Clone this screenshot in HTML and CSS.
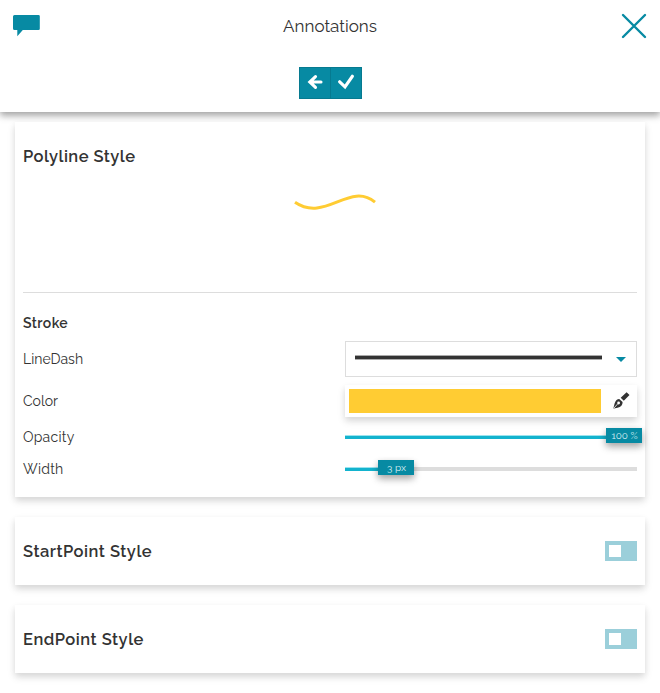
FILE: index.html
```html
<!DOCTYPE html>
<html lang="en">
<head>
<meta charset="utf-8">
<title>Annotations</title>
<link rel="stylesheet" href="styles.css">
</head>
<body>
<header class="header">
  <div class="title-row">
    <svg class="comment" width="28" height="23" viewBox="0 0 28 23"><path fill="#078aa3" d="M1.500 0H25.500a1.300 1.300 0 0 1 1.300 1.300v12.400a1.300 1.300 0 0 1-1.300 1.300H9.800L4.300 21.300V15H1.500A1.500 1.500 0 0 1 0 13.500V1.500A1.500 1.500 0 0 1 1.500 0z"/></svg>
    <h1 class="title">Annotations</h1>
    <svg class="close" width="26" height="26" viewBox="0 0 26 26"><path d="M2 2 24 24M24 2 2 24" stroke="#078aa3" stroke-width="2.400" stroke-linecap="round"/></svg>
  </div>
  <div class="toolbar">
    <button class="tool" aria-label="Back"><svg width="16" height="16" viewBox="0 0 16 16"><path d="M14 8H4M8.500 2.600 2.800 8l5.700 5.400" fill="none" stroke="#fff" stroke-width="3.100" stroke-linecap="round"/></svg></button>
    <button class="tool" aria-label="Save"><svg width="16" height="16" viewBox="0 0 16 16"><path d="M1.700 7.800 7 12.800 14.300 2.300" fill="none" stroke="#fff" stroke-width="3.200" stroke-linecap="round"/></svg></button>
  </div>
</header>
<main class="content">
  <section class="card main-card">
    <h2 class="heading">Polyline Style</h2>
    <div class="preview"><svg width="100" height="40" viewBox="0 0 100 40"><path d="M15 21.200C45 42 70 0 95 21.200" fill="none" stroke="#ffcc33" stroke-width="3"/></svg></div>
    <h3 class="subheading">Stroke</h3>
    <div class="row row-dash">
      <span class="label">LineDash</span>
      <div class="field select"><span class="dash"></span><svg width="10" height="5" viewBox="0 0 10 5"><path d="M0 0h10L5 5z" fill="#078aa3"/></svg></div>
    </div>
    <div class="row row-color">
      <span class="label">Color</span>
      <div class="field color"><span class="swatch"></span><svg width="17" height="17" viewBox="0 0 17 17"><path d="M13.600.3 16.500 3 10.800 8.700 7.700 5.800zM6.200 6.900 9.600 10C9.700 13 8 15.200 4.500 15.800L.8 16.600.400 16.200 1.600 11.500C2.600 8.300 4.300 6.900 6.200 6.900z" fill="#333"/><path d="M1 16 5 11.500" stroke="#fff" stroke-width=".8"/><circle cx="5.600" cy="11" r="1.400" fill="#fff"/></svg></div>
    </div>
    <div class="row">
      <span class="label label-wide">Opacity</span>
      <div class="field slider"><span class="fill" style="width:100%"></span><span class="handle" style="left:261px">100 %</span></div>
    </div>
    <div class="row">
      <span class="label label-wide">Width</span>
      <div class="field slider"><span class="fill" style="width:51px"></span><span class="handle" style="left:33px">3 px</span></div>
    </div>
  </section>
  <section class="card switch-card">
    <h2 class="heading">StartPoint Style</h2>
    <span class="switch"></span>
  </section>
  <section class="card switch-card">
    <h2 class="heading">EndPoint Style</h2>
    <span class="switch"></span>
  </section>
</main>
</body>
</html>
```
FILE: styles.css
```css
* { box-sizing: border-box; }
html { overflow: hidden; }
body {
  margin: 0;
  height: 693px;
  overflow: hidden;
  background: #fff;
  color: #333;
  font: 14px/20px Raleway, Lato, sans-serif;
}
h1, h2, h3 { margin: 0; }
.header {
  height: 112px;
  box-shadow: 0 3px 6px rgba(0,0,0,.2), 0 4px 8px rgba(0,0,0,.2);
}
.title-row {
  height: 52px;
  display: grid;
  grid-template-columns: 52px 1fr 52px;
  align-items: center;
}
.comment { margin: 1px 0 0 13px; }
.title { font-size: 17px; font-weight: 400; text-align: center; }
.close { justify-self: center; }
.toolbar { display: flex; justify-content: center; padding: 15px 0 0 1px; }
.tool {
  width: 32px;
  height: 32px;
  padding: 0 0 3px;
  border: 1px solid #067a90;
  background: #078aa3;
  display: flex;
  align-items: center;
  justify-content: center;
}
.tool + .tool { margin-left: -1px; }
.content {
  padding: 10px 15px 20px;
  display: flex;
  flex-direction: column;
  gap: 20px;
}
.card {
  position: relative;
  padding: 0 8px;
  background: #fff;
  box-shadow: 0 3px 6px rgba(0,0,0,.06), 0 4px 8px rgba(0,0,0,.12);
}
.main-card { height: 375px; }
.heading { font-size: 16.500px; line-height: 20px; font-weight: 600; letter-spacing: .5px; }
.main-card .heading { padding-top: 24px; letter-spacing: .45px; }
.preview {
  height: 127px;
  border-bottom: 1px solid #ddd;
  text-align: center;
  padding: 15px 0 0;
}
.subheading { font-size: 14px; line-height: 20px; font-weight: 600; letter-spacing: .4px; padding-top: 20px; }
.row { height: 32px; display: flex; align-items: center; justify-content: space-between; }
.row-dash { height: 36px; margin-top: 8px; }
.row-color { margin: 8px 0 4px; }
.label-wide { letter-spacing: .25px; }
.field { width: 292px; }
.select {
  height: 36px;
  border: 1px solid #ddd;
  display: flex;
  align-items: center;
  padding: 0 10px 0 9px;
  gap: 14px;
}
.dash { width: 247px; height: 5px; margin-top: -3px; background: #333; border: solid #aaa; border-width: 1px 0; }
.color {
  height: 32px;
  display: flex;
  align-items: center;
  padding: 4px;
  gap: 12px;
  background: #fff;
  box-shadow: 0 3px 6px rgba(0,0,0,.06), 0 4px 8px rgba(0,0,0,.12);
}
.color svg { margin-top: -1px; }
.swatch { width: 252px; height: 24px; background: #ffcc33; }
.slider { position: relative; height: 4px; background: #ddd; }
.fill { display: block; height: 4px; background: #13b3ce; border-top: 1px solid #9be3ee; }
.handle {
  position: absolute;
  top: -7px;
  width: 36px;
  height: 15px;
  background: #078aa3;
  color: #d7eef2;
  font-size: 10px;
  line-height: 16px;
  text-align: center;
  padding-left: 1px;
  box-shadow: 0 3px 6px rgba(0,0,0,.2), 0 4px 8px rgba(0,0,0,.2);
}
.switch-card { height: 68px; display: flex; align-items: center; justify-content: space-between; }
.switch { width: 32px; height: 20px; padding: 4px; background: #9bcfda; }
.switch::before { content: ""; display: block; width: 12px; height: 12px; background: #fff; }
```
